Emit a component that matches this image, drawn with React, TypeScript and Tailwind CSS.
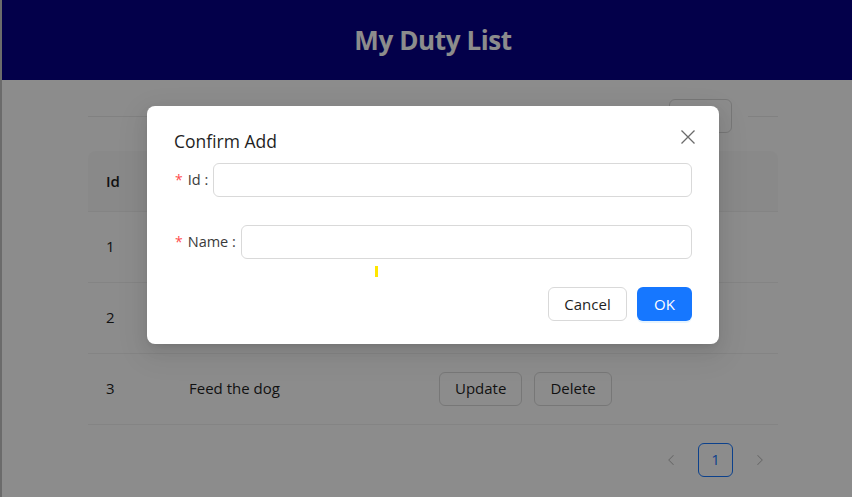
import { ChevronLeft, ChevronRight } from 'lucide-react';

const duties = [
  { id: 1, name: 'Clean the room' },
  { id: 2, name: 'Do the homework' },
  { id: 3, name: 'Feed the dog' },
];

function OutlineButton({ children }: { children: React.ReactNode }) {
  return (
    <button className="h-[34px] rounded-[6px] border border-[#d9d9d9] bg-white px-[15px] text-[15px] text-[#1f1f1f]">
      {children}
    </button>
  );
}

function FormRow({ label, gap }: { label: string; gap: string }) {
  return (
    <div className="flex h-[34px] items-center">
      <span className="mr-[5px] pl-[1px] text-[14px] leading-none text-[#ff4d4f]">*</span>
      <label className={`shrink-0 text-[14.5px] leading-[20px] text-[#3a3a3a] ${gap}`}>{label} :</label>
      <input className="h-[34px] min-w-0 flex-1 rounded-[6px] border border-[#d9d9d9] bg-white px-3 outline-none" />
    </div>
  );
}

export default function App() {
  return (
    <div className="relative h-[497px] w-[852px] overflow-hidden bg-white font-['Open_Sans','Noto_Sans',sans-serif]">
      <div className="h-full w-[864px] border-l-2 border-[#c4c4c4]">
        <header className="flex h-[80px] items-center justify-center bg-[#060088]">
          <h1 className="text-[26px] font-bold tracking-[-0.4px] text-white">My Duty List</h1>
        </header>

        <main className="mx-[86px]">
          {/* divider with add button */}
          <div className="mt-[19px] flex h-[34px] items-center">
            <div className="h-px flex-1 bg-[#ececec]" />
            <button className="mx-[16px] h-[34px] w-[63px] rounded-[6px] border border-[#d9d9d9] bg-white text-[15px]">
              Add
            </button>
            <div className="h-px w-[30px] bg-[#ececec]" />
          </div>

          <table className="mt-[18px] w-full border-collapse text-left text-[15px] text-[#1f1f1f]">
            <thead>
              <tr className="h-[60px] bg-[#fafafa]">
                <th className="w-[83px] rounded-tl-[8px] border-b border-[#f0f0f0] pl-[18px] font-semibold">Id</th>
                <th className="w-[250px] border-b border-[#f0f0f0] pl-[18px] font-semibold">Name</th>
                <th className="rounded-tr-[8px] border-b border-[#f0f0f0] pl-[18px] font-semibold">Action</th>
              </tr>
            </thead>
            <tbody>
              {duties.map((d) => (
                <tr key={d.id} className="h-[71px] border-b border-[#f0f0f0]">
                  <td className="pl-[18px]">{d.id}</td>
                  <td className="pl-[18px]">{d.name}</td>
                  <td className="pl-[18px]">
                    <div className="flex gap-[12px]">
                      <OutlineButton>Update</OutlineButton>
                      <OutlineButton>Delete</OutlineButton>
                    </div>
                  </td>
                </tr>
              ))}
            </tbody>
          </table>

          <div className="mt-[18px] flex items-center justify-end gap-[11px] pr-[2px]">
            <span className="flex h-8 w-8 items-center justify-center text-[#bfbfbf]">
              <ChevronLeft size={18} strokeWidth={1.4} />
            </span>
            <span className="flex h-[34px] w-[35px] items-center justify-center rounded-[6px] border border-[#1677ff] text-[15px] text-[#1677ff]">
              1
            </span>
            <span className="flex h-8 w-8 items-center justify-center text-[#bfbfbf]">
              <ChevronRight size={18} strokeWidth={1.4} />
            </span>
          </div>
        </main>
      </div>

      {/* modal overlay */}
      <div className="absolute inset-0 bg-black/45">
        <div className="relative ml-[147px] mt-[106px] w-[572px] rounded-[8px] bg-white px-[27px] pb-[23px] pt-[22px] shadow-[0_6px_16px_rgba(0,0,0,0.08),0_3px_6px_-4px_rgba(0,0,0,0.12),0_9px_28px_8px_rgba(0,0,0,0.05)]">
          <button className="absolute right-[24px] top-[24px] text-[#6b6b6b]">
            <svg width="14" height="14" viewBox="0 0 14 14" fill="none" stroke="currentColor" strokeWidth="1.3">
              <path d="M0.5 0.5L13.5 13.5M13.5 0.5L0.5 13.5" />
            </svg>
          </button>
          <h2 className="text-[17.5px] font-medium leading-[26px] text-[#1f1f1f]">Confirm Add</h2>

          <div className="mt-[9px]">
            <FormRow label="Id" gap="mr-[5px]" />
          </div>
          <div className="mt-[28px]">
            <FormRow label="Name" gap="mr-[5px]" />
          </div>

          <div className="mt-[7px] h-[11px]">
            <div className="ml-[201px] h-[11px] w-[3px] bg-[#ffe600]" />
          </div>

          <div className="mt-[10px] flex justify-end gap-[10px]">
            <button className="h-[34px] w-[79px] rounded-[6px] border border-[#d9d9d9] bg-white text-[15px] text-[#1f1f1f]">
              Cancel
            </button>
            <button className="h-[34px] w-[55px] rounded-[6px] bg-[#1677ff] text-[15px] text-white shadow-[0_2px_0_rgba(5,145,255,0.1)]">
              OK
            </button>
          </div>
        </div>
      </div>
    </div>
  );
}
